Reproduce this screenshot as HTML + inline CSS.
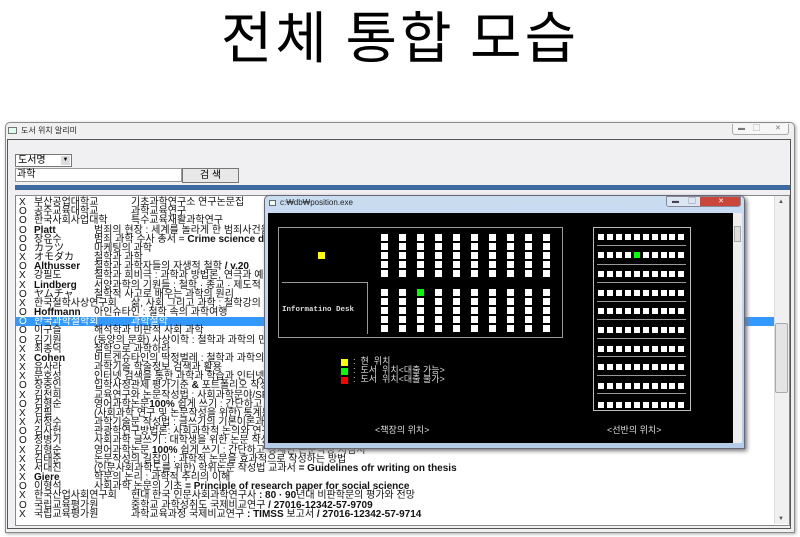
<!DOCTYPE html>
<html><head><meta charset="utf-8"><style>
*{margin:0;padding:0;box-sizing:border-box}
body{width:800px;height:537px;background:#fff;position:relative;overflow:hidden;font-family:"Liberation Sans","Noto Sans CJK KR",sans-serif}
.abs{position:absolute}
#title{left:0;width:800px;top:3px;text-align:center;font-size:56px;line-height:64px;color:#000;font-family:"Noto Sans CJK KR",sans-serif;font-weight:400;letter-spacing:3px}
#win{left:5px;top:122px;width:790px;height:411px;border:1px solid #8a8a8a;border-radius:5px 5px 0 0;background:#f0f0f0;box-shadow:1px 1px 3px #aaa}
#list{left:15px;top:195px;width:775px;height:331px;background:#fff;border:1px solid #888;overflow:hidden;font-size:10px;line-height:9.17px}
.r{position:absolute;left:0;height:9.17px;width:760px;white-space:nowrap;color:#111}
.r span{position:absolute;top:0}
.sel{background:#3399ff;color:#fff}
.sq{position:absolute;width:7px;height:7px;background:#fff}
.ss{position:absolute;width:6px;height:6px;background:#fff}
</style></head><body>
<div id="title" class="abs">전체 통합 모습</div>
<div id="win" class="abs"></div>
<div class="abs" style="left:8px;top:127px;width:9px;height:7px;border:1px solid #777;background:#dfe"></div>
<div class="abs" style="left:21px;top:125px;font-size:8px;color:#222">도서 위치 알리미</div>
<div class="abs" style="left:732px;top:124px;width:57px;height:11px;border:1px solid #aaa;border-top:none;border-radius:0 0 3px 3px;background:#f6f6f6;font-size:7px;color:#777;line-height:10px"><span style="position:absolute;left:5px">▬</span><span style="position:absolute;left:20px">▢</span><span style="position:absolute;left:42px">✕</span></div>
<div class="abs" style="left:7px;top:139px;width:784px;height:390px;border:1px solid #555;background:#f0f0f2"></div>
<div class="abs" style="left:15px;top:154px;width:57px;height:13px;border:1px solid #777;background:#fff;font-size:10px;line-height:11px;padding-left:2px">도서명<span style="position:absolute;right:1px;top:1px;width:9px;height:9px;background:#ddd;font-size:6px;text-align:center;line-height:9px">▼</span></div>
<div class="abs" style="left:15px;top:168px;width:167px;height:14px;border:1px solid #999;background:#fff;font-size:10px;line-height:12px;padding-left:1px">과학</div>
<div class="abs" style="left:182px;top:168px;width:57px;height:15px;border:1px solid #777;background:#e8e8e8;font-size:10px;line-height:13px;text-align:center">검 색</div>
<div class="abs" style="left:15px;top:185px;width:775px;height:5px;background:#3d6aa0"></div>
<div id="list" class="abs">
<div class="r" style="top:2px"><span style="left:3px">X</span><span style="left:18px">부산공업대학교</span><span style="left:115px">기초과학연구소 연구논문집</span></div>
<div class="r" style="top:11.2px"><span style="left:3px">O</span><span style="left:18px">공주교육대학교</span><span style="left:115px">과학교육연구</span></div>
<div class="r" style="top:20.3px"><span style="left:3px">O</span><span style="left:18px">한국사회사업대학</span><span style="left:115px">특수교육재활과학연구</span></div>
<div class="r" style="top:29.5px"><span style="left:3px">O</span><span style="left:18px;font-weight:bold">Platt</span><span style="left:78px">범죄의 현장 : 세계를 놀라게 한 범죄사건을 해부하다</span></div>
<div class="r" style="top:38.7px"><span style="left:3px">O</span><span style="left:18px">장유수</span><span style="left:78px">범죄 과학 수사 총서 = <b>Crime science detection</b></span></div>
<div class="r" style="top:47.9px"><span style="left:3px">O</span><span style="left:18px">カラツ</span><span style="left:78px">마케팅의 과학</span></div>
<div class="r" style="top:57px"><span style="left:3px">X</span><span style="left:18px">オモダカ</span><span style="left:78px">철학과 과학</span></div>
<div class="r" style="top:66.2px"><span style="left:3px">O</span><span style="left:18px;font-weight:bold">Althusser</span><span style="left:78px">철학과 과학자들의 자생적 철학 <b>/ v.20</b></span></div>
<div class="r" style="top:75.4px"><span style="left:3px">X</span><span style="left:18px">강필도</span><span style="left:78px">철학과 희비극 : 과학과 방법론, 연극과 예술</span></div>
<div class="r" style="top:84.5px"><span style="left:3px">X</span><span style="left:18px;font-weight:bold">Lindberg</span><span style="left:78px">서양과학의 기원들 : 철학 · 종교 · 제도적 맥락</span></div>
<div class="r" style="top:93.7px"><span style="left:3px">O</span><span style="left:18px">ヤムチャ</span><span style="left:78px">철학적 사고로 배우는 과학의 원리</span></div>
<div class="r" style="top:102.9px"><span style="left:3px">X</span><span style="left:18px">한국철학사상연구회</span><span style="left:115px">삶, 사회 그리고 과학 : 철학강의</span></div>
<div class="r" style="top:112px"><span style="left:3px">O</span><span style="left:18px;font-weight:bold">Hoffmann</span><span style="left:78px">아인슈타인 : 철학 속의 과학여행</span></div>
<div class="r sel" style="top:121.2px"><span style="left:3px">O</span><span style="left:18px">한국과학철학회</span><span style="left:115px">과학철학</span></div>
<div class="r" style="top:130.4px"><span style="left:3px">O</span><span style="left:18px">이구슬</span><span style="left:78px">해석학과 비판적 사회 과학</span></div>
<div class="r" style="top:139.5px"><span style="left:3px">O</span><span style="left:18px">김기원</span><span style="left:78px">(동양의 문화) 사상이학 : 철학과 과학의 만남</span></div>
<div class="r" style="top:148.7px"><span style="left:3px">X</span><span style="left:18px">최종덕</span><span style="left:78px">철학으로 과학하라</span></div>
<div class="r" style="top:157.9px"><span style="left:3px">X</span><span style="left:18px;font-weight:bold">Cohen</span><span style="left:78px">비트겐슈타인의 딱정벌레 : 철학과 과학의 경계</span></div>
<div class="r" style="top:167px"><span style="left:3px">X</span><span style="left:18px">유사라</span><span style="left:78px">과학기술 학술정보 검색과 활용</span></div>
<div class="r" style="top:176.2px"><span style="left:3px">X</span><span style="left:18px">문호성</span><span style="left:78px">인터넷 검색을 통한 과학과 학습과 인터넷 활용</span></div>
<div class="r" style="top:185.4px"><span style="left:3px">O</span><span style="left:18px">장충인</span><span style="left:78px">입학사정관제 평가기준 <b>&amp;</b> 포트폴리오 작성</span></div>
<div class="r" style="top:194.6px"><span style="left:3px">X</span><span style="left:18px">김천희</span><span style="left:78px">교육연구와 논문작성법 : 사회과학문야/SPSS</span></div>
<div class="r" style="top:203.7px"><span style="left:3px">O</span><span style="left:18px">김형순</span><span style="left:78px">영어과학논문<b>100%</b> 쉽게 쓰기 : 간단하고 상세한 논문작성 지침서</span></div>
<div class="r" style="top:212.9px"><span style="left:3px">X</span><span style="left:18px">김필</span><span style="left:78px">(사회과학 연구 및 논문작성을 위한) 통계분석</span></div>
<div class="r" style="top:222.1px"><span style="left:3px">X</span><span style="left:18px">서정수</span><span style="left:78px">과학기술문 작성법 : 글쓰기의 기본이론과 실제</span></div>
<div class="r" style="top:231.2px"><span style="left:3px">O</span><span style="left:18px">김사헌</span><span style="left:78px">관광학연구방법론: 사회과학적 논의와 연구</span></div>
<div class="r" style="top:240.4px"><span style="left:3px">O</span><span style="left:18px">정병기</span><span style="left:78px">사회과학 글쓰기 : 대학생을 위한 논문 작성법</span></div>
<div class="r" style="top:249.6px"><span style="left:3px">X</span><span style="left:18px">김형순</span><span style="left:78px">영어과학논문 <b>100%</b> 쉽게 쓰기 : 간단하고 상세한 논문작성 지침서</span></div>
<div class="r" style="top:258.7px"><span style="left:3px">X</span><span style="left:18px">김태준</span><span style="left:78px">논문작성의 길잡이 : 과학적 논문을 효과적으로 작성하는 방법</span></div>
<div class="r" style="top:267.9px"><span style="left:3px">X</span><span style="left:18px">서대진</span><span style="left:78px">(인문사회과학도를 위한) 학위논문 작성법 교과서 <b>= Guidelines ofr writing on thesis</b></span></div>
<div class="r" style="top:277.1px"><span style="left:3px">X</span><span style="left:18px;font-weight:bold">Giere</span><span style="left:78px">학문의 논리 : 과학적 추리의 이해</span></div>
<div class="r" style="top:286.2px"><span style="left:3px">O</span><span style="left:18px">이형석</span><span style="left:78px">사회과학 논문의 기초 <b>= Principle of research paper for social science</b></span></div>
<div class="r" style="top:295.4px"><span style="left:3px">X</span><span style="left:18px">한국산업사회연구회</span><span style="left:115px">현대 한국 인문사회과학연구사 <b>: 80 · 90</b>년대 비판학문의 평가와 전망</span></div>
<div class="r" style="top:304.6px"><span style="left:3px">O</span><span style="left:18px">국립교육평가원</span><span style="left:115px">중학교 과학성취도 국제비교연구 <b>/ 27016-12342-57-9709</b></span></div>
<div class="r" style="top:313.8px"><span style="left:3px">X</span><span style="left:18px">국립교육평가원</span><span style="left:115px">과학교육과정 국제비교연구 <b>: TIMSS</b> 보고서 <b>/ 27016-12342-57-9714</b></span></div>
</div>
<div class="abs" style="left:774px;top:196px;width:15px;height:328px;background:#f0f0f0;border-left:1px solid #ddd"></div>
<div class="abs" style="left:775px;top:323px;width:13px;height:70px;background:#e4e4e4;border:1px solid #aaa;border-radius:2px"></div>
<div class="abs" style="left:778px;top:199px;font-size:6px;color:#555">▲</div>
<div class="abs" style="left:778px;top:516px;font-size:6px;color:#555">▼</div>

<div class="abs" style="left:264px;top:195px;width:481px;height:254px;border:1px solid #667;border-radius:5px 5px 0 0;background:linear-gradient(#c9dcf0,#b4cce8);box-shadow:2px 2px 4px #777"></div>
<div class="abs" style="left:269px;top:200px;width:7px;height:6px;border:1px solid #666;background:#efe"></div>
<div class="abs" style="left:280px;top:198px;font-size:8px;color:#222">c:₩db₩position.exe</div>
<div class="abs" style="left:666px;top:196px;width:75px;height:11px;border:1px solid #889;border-radius:0 0 3px 3px;overflow:hidden;font-size:7px;line-height:10px;color:#445">
<div class="abs" style="left:0;top:0;width:17px;height:11px;background:#dce6f2;text-align:center">▬</div>
<div class="abs" style="left:17px;top:0;width:16px;height:11px;background:#dce6f2;text-align:center">▢</div>
<div class="abs" style="left:33px;top:0;width:42px;height:11px;background:#c8463a;color:#fff;text-align:center">✕</div></div>
<div class="abs" style="left:268px;top:213px;width:466px;height:230px;background:#000"></div>
<div class="abs" style="left:733px;top:213px;width:9px;height:230px;background:#eee"></div>
<div class="abs" style="left:734px;top:226px;width:7px;height:16px;background:#ddd;border:1px solid #aaa"></div>
<div class="abs" style="left:278px;top:227px;width:285px;height:111px;border:1px solid #999"></div>
<div class="abs" style="left:282px;top:282px;width:86px;height:52px;border-top:1px solid #999;border-right:1px solid #999"></div>
<div class="abs" style="left:282px;top:306px;font-family:'Liberation Mono',monospace;font-size:7.5px;font-weight:bold;color:#ddd">Informatino Desk</div>
<div class="abs" style="left:318px;top:252px;width:7px;height:7px;background:#ff0"></div>
<div class="abs" style="left:593px;top:227px;width:98px;height:184px;border:1px solid #bbb"></div>
<div id="grid"></div>
<div class="abs" style="left:341px;top:359px;width:7px;height:7px;background:#ff0"></div>
<div class="abs" style="left:341px;top:368px;width:7px;height:7px;background:#0f0"></div>
<div class="abs" style="left:341px;top:377px;width:7px;height:7px;background:#f00"></div>
<div class="abs" style="left:353px;top:357px;font-size:9px;line-height:9.2px;color:#ddd;white-space:pre">:  현  위치
:  도서  위치&lt;대출 가능&gt;
:  도서  위치&lt;대출 불가&gt;</div>
<div class="abs" style="left:375px;top:423px;font-size:9px;color:#ddd">&lt;책장의 위치&gt;</div>
<div class="abs" style="left:607px;top:423px;font-size:9px;color:#ddd">&lt;선반의 위치&gt;</div>
<script>
var g=document.getElementById('grid'),h='';
for(var b=0;b<2;b++)for(var r=0;r<5;r++)for(var c=0;c<10;c++){
 var x=380.5+c*18.1,y=(b?288.5:233.5)+r*9.2,col=(b==1&&r==0&&c==2)?'#0f0':'#fff';
 h+='<div class="sq" style="left:'+x+'px;top:'+y+'px;background:'+col+'"></div>';}
for(var r=0;r<10;r++){for(var c=0;c<10;c++){
 var x=598+c*8.93,y=233.5+r*18.7,col=(r==1&&c==4)?'#0f0':'#fff';
 h+='<div class="ss" style="left:'+x+'px;top:'+y+'px;background:'+col+'"></div>';}
 if(r<9)h+='<div class="abs" style="left:597px;top:'+(245+r*18.5)+'px;width:89px;height:1px;background:#999"></div>';}
g.innerHTML=h;
</script>
</body></html>
